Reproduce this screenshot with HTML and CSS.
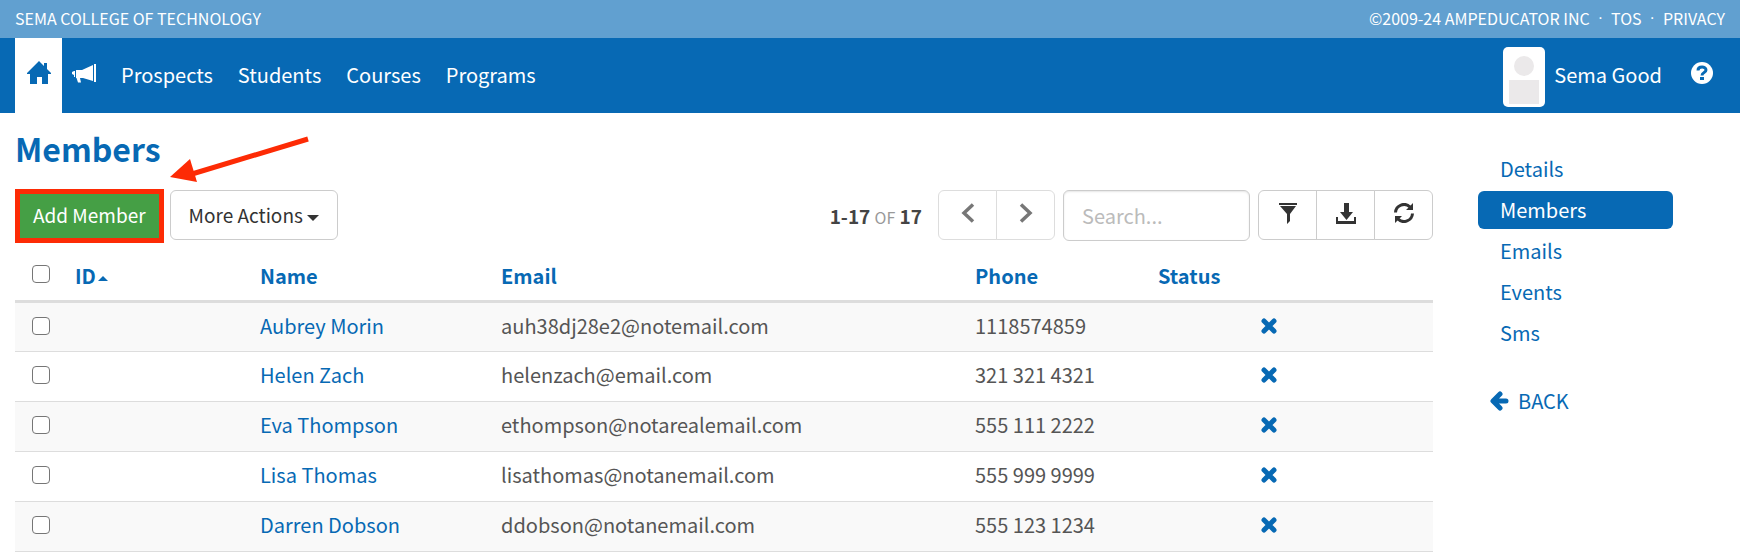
FILE: index.html
```
<!DOCTYPE html>
<html lang="en">
<head>
    <meta charset="UTF-8">
    <meta name="viewport" content="width=device-width, initial-scale=1.0">
    <title>Members</title>
    <link rel="stylesheet" href="styles.css">
</head>
<body>
    <div class="topbar">
        <span>SEMA COLLEGE OF TECHNOLOGY</span>
        <div class="legal">
            <span>©2009-24 AMPEDUCATOR INC</span>
            <span class="dot">·</span>
            <a href="#">TOS</a>
            <span class="dot">·</span>
            <a href="#">PRIVACY</a>
        </div>
    </div>
    <nav class="navbar">
        <a class="home" href="#" aria-label="Home">
            <svg width="24" height="24" viewBox="0 0 24 24"><path fill="currentColor" d="M12 0L0 12v1h3v10h7v-7h5v7h6V13h3v-1l-4-4V2h-3v3z"/></svg>
        </a>
        <a class="news" href="#" aria-label="Announcements">
            <svg width="24" height="20" viewBox="0 0 24 20"><path fill="currentColor" d="M22 0h2v18h-2zM21 1v16l-10-3H8l1 4.500H6L4.500 14H4V6h6zM3 7v6H2v-2L0 10V8l2-1z"/></svg>
        </a>
        <a href="#">Prospects</a>
        <a href="#">Students</a>
        <a href="#">Courses</a>
        <a href="#">Programs</a>
        <a class="user" href="#">
            <svg class="avatar" width="42" height="60" viewBox="0 0 42 60"><rect width="42" height="60" rx="5" fill="#fff"/><circle cx="21" cy="19" r="10" fill="#ebe9ea"/><path fill="#ebe9ea" d="M6 33h30v24H6z"/></svg>
            Sema Good
        </a>
        <a class="help" href="#" aria-label="Help">
            <svg width="22" height="22" viewBox="0 0 22 22"><circle cx="11" cy="11" r="11" fill="#fff"/><path fill="none" stroke="#0769b4" stroke-width="3" d="M7 8.500c0-4.500 8-4.500 8-.5 0 3-4 2-4 5.500"/><path fill="#0769b4" d="M9 15h4v3H9z"/></svg>
        </a>
    </nav>

    <div class="page">
        <main class="content">
            <h1>Members</h1>
            <div class="toolbar">
                <button class="btn add">Add Member</button>
                <button class="btn more">More Actions <i class="caret"></i></button>
                <p class="count"><b>1-17</b> <small>OF</small> <b>17</b></p>
                <div class="group pager">
                    <button aria-label="Previous"><svg width="14" height="20" viewBox="0 0 14 20"><path fill="none" stroke="currentColor" stroke-width="3.500" d="M12 1.500L3 10l9 8.500"/></svg></button>
                    <button aria-label="Next"><svg width="14" height="20" viewBox="0 0 14 20"><path fill="none" stroke="currentColor" stroke-width="3.500" d="M2 1.500L11 10l-9 8.500"/></svg></button>
                </div>
                <input class="search" type="text" placeholder="Search..." aria-label="Search">
                <div class="group tools">
                    <button aria-label="Filter"><svg width="18" height="21" viewBox="0 0 18 21"><path fill="currentColor" d="M0 0h18v2H0zM1 3h16l-6 8v7l-3 3V11z"/></svg></button>
                    <button aria-label="Download"><svg width="20" height="21" viewBox="0 0 20 21"><path fill="currentColor" d="M8 0h5v9h4l-6.500 8L4 9h4zM0 14h2v4h16v-4h2v7H0z"/></svg></button>
                    <button aria-label="Refresh"><svg width="20" height="20" viewBox="0 0 20 20"><path fill="none" stroke="currentColor" stroke-width="3" d="M1.500 9.500A8.500 8.500 0 0 1 16 4M18.500 10.500A8.500 8.500 0 0 1 4 16"/><path fill="currentColor" d="M19 0v7h-7zM1 20v-7h7z"/></svg></button>
                </div>
                <svg class="arrow" width="140" height="54" viewBox="0 0 140 54"><path stroke="#fd2b05" stroke-width="5" d="M138 3L22 38"/><path fill="#fd2b05" d="M0 41l20-18 7 23z"/></svg>
            </div>
            <table>
                <colgroup><col class="c-check"><col class="c-id"><col class="c-name"><col class="c-email"><col class="c-phone"><col class="c-status"><col></colgroup>
                <thead>
                    <tr>
                        <th><input type="checkbox" aria-label="Select all"></th>
                        <th><a href="#">ID<i class="caret up"></i></a></th>
                        <th><a href="#">Name</a></th>
                        <th><a href="#">Email</a></th>
                        <th><a href="#">Phone</a></th>
                        <th><a href="#">Status</a></th>
                        <th></th>
                    </tr>
                </thead>
                <tbody>
                    <tr>
                        <td><input type="checkbox" aria-label="Select Aubrey Morin"></td>
                        <td></td>
                        <td><a href="#">Aubrey Morin</a></td>
                        <td>auh38dj28e2@notemail.com</td>
                        <td>1118574859</td>
                        <td class="status"><svg width="16" height="16" viewBox="0 0 16 16"><path d="M3 3l10 10M13 3L3 13"/></svg></td>
                        <td></td>
                    </tr>
                    <tr>
                        <td><input type="checkbox" aria-label="Select Helen Zach"></td>
                        <td></td>
                        <td><a href="#">Helen Zach</a></td>
                        <td>helenzach@email.com</td>
                        <td>321 321 4321</td>
                        <td class="status"><svg width="16" height="16" viewBox="0 0 16 16"><path d="M3 3l10 10M13 3L3 13"/></svg></td>
                        <td></td>
                    </tr>
                    <tr>
                        <td><input type="checkbox" aria-label="Select Eva Thompson"></td>
                        <td></td>
                        <td><a href="#">Eva Thompson</a></td>
                        <td>ethompson@notarealemail.com</td>
                        <td>555 111 2222</td>
                        <td class="status"><svg width="16" height="16" viewBox="0 0 16 16"><path d="M3 3l10 10M13 3L3 13"/></svg></td>
                        <td></td>
                    </tr>
                    <tr>
                        <td><input type="checkbox" aria-label="Select Lisa Thomas"></td>
                        <td></td>
                        <td><a href="#">Lisa Thomas</a></td>
                        <td>lisathomas@notanemail.com</td>
                        <td>555 999 9999</td>
                        <td class="status"><svg width="16" height="16" viewBox="0 0 16 16"><path d="M3 3l10 10M13 3L3 13"/></svg></td>
                        <td></td>
                    </tr>
                    <tr>
                        <td><input type="checkbox" aria-label="Select Darren Dobson"></td>
                        <td></td>
                        <td><a href="#">Darren Dobson</a></td>
                        <td>ddobson@notanemail.com</td>
                        <td>555 123 1234</td>
                        <td class="status"><svg width="16" height="16" viewBox="0 0 16 16"><path d="M3 3l10 10M13 3L3 13"/></svg></td>
                        <td></td>
                    </tr>
                </tbody>
            </table>
        </main>
        <aside class="side">
            <a href="#">Details</a>
            <a class="active" href="#">Members</a>
            <a href="#">Emails</a>
            <a href="#">Events</a>
            <a href="#">Sms</a>
            <a class="back" href="#">
                <svg width="19" height="20" viewBox="0 0 19 20"><path fill="none" stroke="currentColor" stroke-width="5" stroke-linecap="round" stroke-linejoin="round" d="M10 3L3 10l7 7M4 10h12"/></svg>
                BACK
            </a>
        </aside>
    </div>
</body>
</html>
```
FILE: styles.css
```
* { box-sizing: border-box; }
body {
    margin: 0;
    font-family: "Noto Sans CJK SC", "Noto Sans", sans-serif;
    font-size: 20px;
    line-height: 28px;
    color: #555;
    background: #fff;
}
a { color: #0769b4; text-decoration: none; }
svg { display: block; }
button, input { font: inherit; }

/* header */
.topbar {
    height: 38px;
    padding: 0 15px 3px;
    display: flex;
    justify-content: space-between;
    align-items: center;
    font-size: 16px;
    color: #fff;
    background: #61a0d0;
}
.topbar a { color: #fff; }
.legal { display: flex; gap: 8px; }
.dot { font-family: "Liberation Sans", sans-serif; }
.navbar {
    height: 75px;
    padding: 0 27px 2px 15px;
    display: flex;
    align-items: center;
    gap: 25px;
    color: #fff;
    background: #0769b4;
}
.navbar a { color: #fff; }
.navbar .home {
    height: 75px;
    margin-bottom: -2px;
    padding: 23px 11px 0 12px;
    color: #0769b4;
    background: #fff;
}
.navbar .news { margin: 0 0 2px -15px; }
.navbar .user {
    margin-left: auto;
    display: flex;
    align-items: center;
    gap: 9px;
}
.avatar { margin-top: 4px; }
.help { margin: 0 0 4px 4px; }

/* page */
.page { display: flex; }
.content { flex: 1; padding: 17px 0 0 15px; }
h1 {
    margin: 0;
    font-size: 32px;
    line-height: 36px;
    font-weight: 600;
    color: #0769b4;
}
.toolbar {
    height: 54px;
    margin-top: 23px;
    display: flex;
    align-items: center;
    gap: 8px;
    position: relative;
}
.btn {
    height: 50px;
    padding: 0 18px;
    font-size: 19px;
    color: #333;
    background: #fff;
    border: 1px solid #ccc;
    border-radius: 6px;
}
.btn.add {
    height: 54px;
    padding: 0 13px 2px;
    color: #fff;
    background: #459f45;
    border: 5px solid #fd2b05;
    border-radius: 0;
}
.more, .count, .group, .search { margin-bottom: 2px; }
.btn.more { margin-left: -2px; }
.caret {
    display: inline-block;
    vertical-align: middle;
    border: 6px solid transparent;
    border-top-color: currentColor;
    border-bottom: 0;
}
.caret.up {
    margin-left: 2px;
    border: 5px solid transparent;
    border-bottom-color: currentColor;
    border-top: 0;
}
.count { margin: 0 8px 0 auto; font-size: 19px; color: #444; }
.count small { font-size: 16px; color: #999; }
.group { display: flex; }
.group button {
    width: 59px;
    height: 50px;
    padding: 0 0 4px;
    display: flex;
    justify-content: center;
    align-items: center;
    color: #333;
    background: #fff;
    border: 1px solid #ccc;
}
.group button + button { margin-left: -1px; }
.group button:first-child { border-radius: 6px 0 0 6px; }
.group button:last-child { border-radius: 0 6px 6px 0; }
.pager button { color: #777; border-color: #ddd; }
.search {
    width: 187px;
    height: 51px;
    padding: 0 18px;
    border: 1px solid #ccc;
    border-radius: 6px;
    box-shadow: inset 0 1px 2px rgba(0,0,0,.1);
}
.search::placeholder { color: #bbb; }
.arrow { position: absolute; left: 155px; top: -53px; }

/* table */
table {
    width: 100%;
    margin-top: 8px;
    table-layout: fixed;
    border-collapse: collapse;
}
.c-check { width: 52px; }
.c-id { width: 185px; }
.c-name { width: 241px; }
.c-email { width: 474px; }
.c-phone { width: 183px; }
.c-status { width: 238px; }
th, td {
    height: 50px;
    padding: 0 8px 2px;
    text-align: left;
    border-bottom: 1px solid #ddd;
}
th { padding: 2px 8px 0; font-weight: 600; border-bottom-width: 3px; }
tbody tr:nth-child(odd) { background: #f9f9f9; }
td input, th input {
    appearance: none;
    width: 18px;
    height: 18px;
    margin: 0 0 4px 9px;
    display: block;
    background: #fff;
    border: 1px solid #767676;
    border-radius: 4px;
}
td input { margin-bottom: 0; }
.status svg {
    margin: 0 auto;
    fill: none;
    stroke: #0769b4;
    stroke-width: 5px;
    stroke-linecap: round;
}

/* side menu */
.side {
    width: 307px;
    padding: 37px 67px 0 45px;
    display: flex;
    flex-direction: column;
    gap: 3px;
}
.side a { padding: 5px 22px; border-radius: 6px; }
.side .active { color: #fff; background: #0769b4; }
.side .back {
    margin-top: 27px;
    padding-left: 12px;
    display: flex;
    align-items: center;
    gap: 9px;
}
```
